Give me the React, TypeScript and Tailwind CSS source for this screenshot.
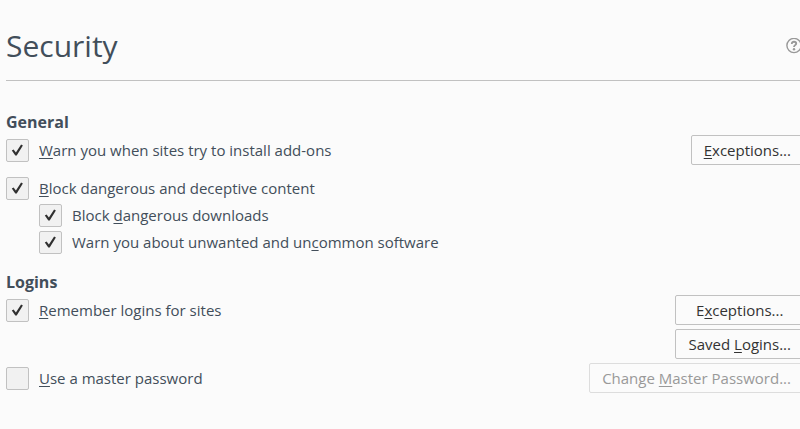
import { useState } from "react";
import type { ReactNode } from "react";

type CheckRowProps = {
  id: string;
  defaultChecked?: boolean;
  children: ReactNode;
};

// Underlined access key inside a label
const Key = ({ children }: { children: ReactNode }) => (
  <span className="underline decoration-1 underline-offset-2">{children}</span>
);

const CheckRow = ({ id, defaultChecked = false, children }: CheckRowProps) => {
  const [checked, setChecked] = useState(defaultChecked);

  return (
    <div className="flex items-center gap-2.5">
      <span className="grid shrink-0 place-items-center">
        <input
          id={id}
          type="checkbox"
          checked={checked}
          onChange={(e) => setChecked(e.target.checked)}
          className="col-start-1 row-start-1 size-[23px] appearance-none rounded-xs border border-[#c1c1c1] bg-[#f1f1f1]"
        />
        {checked && (
          <svg
            viewBox="0 0 23 23"
            className="pointer-events-none col-start-1 row-start-1 size-[23px]"
            aria-hidden="true"
          >
            <path
              d="M5.8 11.5 L7.6 10.4 L9.9 13.5 L15.1 5.6 L16.9 6.5 L10.7 16.5 H9.3 Z"
              fill="#303030"
            />
          </svg>
        )}
      </span>
      <label htmlFor={id}>{children}</label>
    </div>
  );
};

const PrefButton = ({ disabled, children }: { disabled?: boolean; children: ReactNode }) => (
  <button
    type="button"
    disabled={disabled}
    className="h-[30px] rounded-xs border border-[#c1c1c1] bg-[#fbfbfb] px-3 text-[#333333] disabled:border-[#dddddd] disabled:text-[#999999]"
  >
    {children}
  </button>
);

const App = () => {
  return (
    <div className="min-h-screen overflow-x-hidden bg-[#fbfbfb] font-['Open_Sans','Noto_Sans',sans-serif] text-[15px] leading-6 text-[#424e5a]">
      {/* Content runs slightly past the right edge of the pane */}
      <main className="-mr-1 pt-[26px] pl-1.5">
        <header className="flex items-center justify-between border-b border-[#c1c1c1] pr-0.5 pb-3.5">
          <h1 className="text-[30px] leading-10">Security</h1>
          <button type="button" aria-label="Help">
            <svg viewBox="0 0 16 16" className="size-4" fill="none" aria-hidden="true">
              <circle cx="8" cy="7.5" r="7.1" stroke="#999999" strokeWidth="1.4" />
              <path
                d="M5.8 5.9 C5.8 4.5 6.8 3.8 8 3.8 C9.3 3.8 10.2 4.5 10.2 5.6 C10.2 7.1 8 7.2 8 9"
                stroke="#999999"
                strokeWidth="1.9"
              />
              <circle cx="8" cy="11.3" r="1.2" fill="#999999" />
            </svg>
          </button>
        </header>

        <section className="pt-[29px]">
          <h2 className="text-base leading-6 font-bold">General</h2>
          <div className="flex items-center justify-between pt-px">
            <CheckRow id="warn-addons" defaultChecked>
              <Key>W</Key>arn you when sites try to install add-ons
            </CheckRow>
            <PrefButton>
              <Key>E</Key>xceptions...
            </PrefButton>
          </div>
          <div className="flex flex-col gap-[3px] pt-[11px]">
            <CheckRow id="block-content" defaultChecked>
              <Key>B</Key>lock dangerous and deceptive content
            </CheckRow>
            <div className="flex flex-col gap-[3px] pl-[33px]">
              <CheckRow id="block-downloads" defaultChecked>
                Block <Key>d</Key>angerous downloads
              </CheckRow>
              <CheckRow id="warn-software" defaultChecked>
                Warn you about unwanted and un<Key>c</Key>ommon software
              </CheckRow>
            </div>
          </div>
        </section>

        <section className="pt-4">
          <h2 className="text-base leading-6 font-bold">Logins</h2>
          <div className="flex items-start justify-between pt-px">
            <div className="flex h-[30px] items-center">
              <CheckRow id="remember-logins" defaultChecked>
                <Key>R</Key>emember logins for sites
              </CheckRow>
            </div>
            <div className="flex flex-col gap-1">
              <PrefButton>
                E<Key>x</Key>ceptions...
              </PrefButton>
              <PrefButton>
                Saved <Key>L</Key>ogins...
              </PrefButton>
            </div>
          </div>
          <div className="flex items-center justify-between pt-1">
            <CheckRow id="master-password">
              <Key>U</Key>se a master password
            </CheckRow>
            <PrefButton disabled>
              Change <Key>M</Key>aster Password...
            </PrefButton>
          </div>
        </section>
      </main>
    </div>
  );
};

export default App;
